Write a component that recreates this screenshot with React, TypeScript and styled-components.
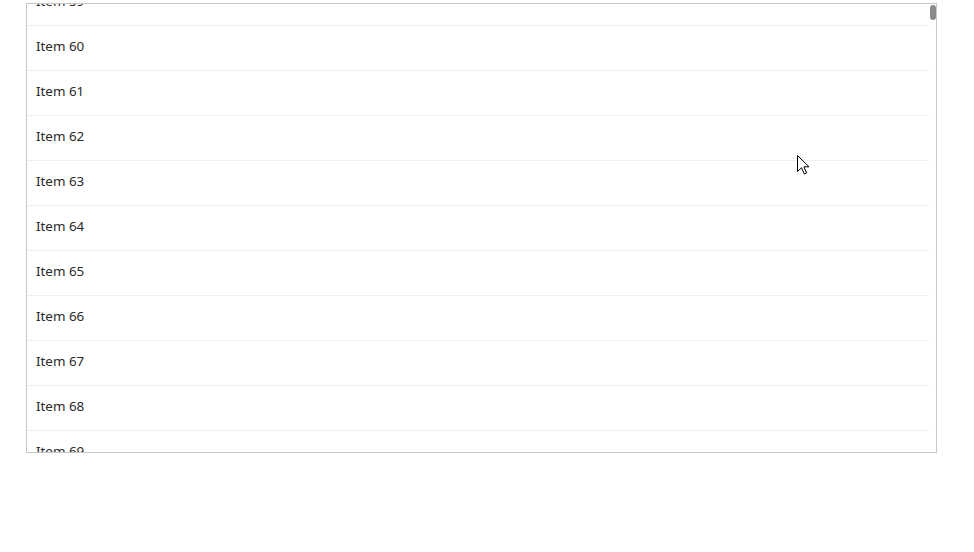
import React from "react";
import styled, { createGlobalStyle } from "styled-components";

const GlobalStyle = createGlobalStyle`
  html, body {
    margin: 0;
    padding: 0;
    background: #ffffff;
  }
  body {
    font-family: "Noto Sans", "Open Sans", sans-serif;
  }
`;

const Page = styled.div`
  position: relative;
  width: 974px;
  height: 552px;
  padding: 3px 0 0 26px;
  box-sizing: border-box;
`;

const Viewport = styled.div`
  width: 911px;
  height: 450px;
  border: 1px solid #c6c6c6;
  box-sizing: border-box;
  display: flex;
  overflow: hidden;
  background: #ffffff;
`;

const List = styled.ul<{ $offset: number }>`
  list-style: none;
  margin: ${(p) => p.$offset}px 0 0 0;
  padding: 0;
  flex: 1;
  min-width: 0;
`;

const Row = styled.li`
  height: 45px;
  box-sizing: border-box;
  border-bottom: 1px solid #efefef;
  display: flex;
  align-items: center;
  padding: 0 9px 5px;
  font-size: 13.4px;
  color: #2a2a2a;
  white-space: nowrap;
`;

const Track = styled.div`
  width: 7px;
  flex: none;
  padding-top: 1px;
  display: flex;
  justify-content: center;
`;

const Thumb = styled.div`
  width: 6px;
  height: 15px;
  border-radius: 3px;
  background: #8b8b8b;
`;

const Cursor = styled.svg`
  position: absolute;
  left: 797px;
  top: 155px;
  width: 13px;
  height: 20px;
  pointer-events: none;
`;

const items = Array.from({ length: 11 }, (_, i) => 59 + i);

export default function App() {
  return (
    <>
      <GlobalStyle />
      <Page>
        <Viewport>
          <List $offset={-23}>
            {items.map((n) => (
              <Row key={n}>Item {n}</Row>
            ))}
          </List>
          <Track>
            <Thumb />
          </Track>
        </Viewport>
        <Cursor viewBox="0 0 13 20">
          <path
            d="M0.5 0.5 L0.5 16.5 L4.5 12.7 L7.3 19 L9.6 18 L6.9 11.8 L12 11.8 Z"
            fill="#ffffff"
            stroke="#000000"
            strokeWidth="1"
            strokeLinejoin="miter"
          />
        </Cursor>
      </Page>
    </>
  );
}
